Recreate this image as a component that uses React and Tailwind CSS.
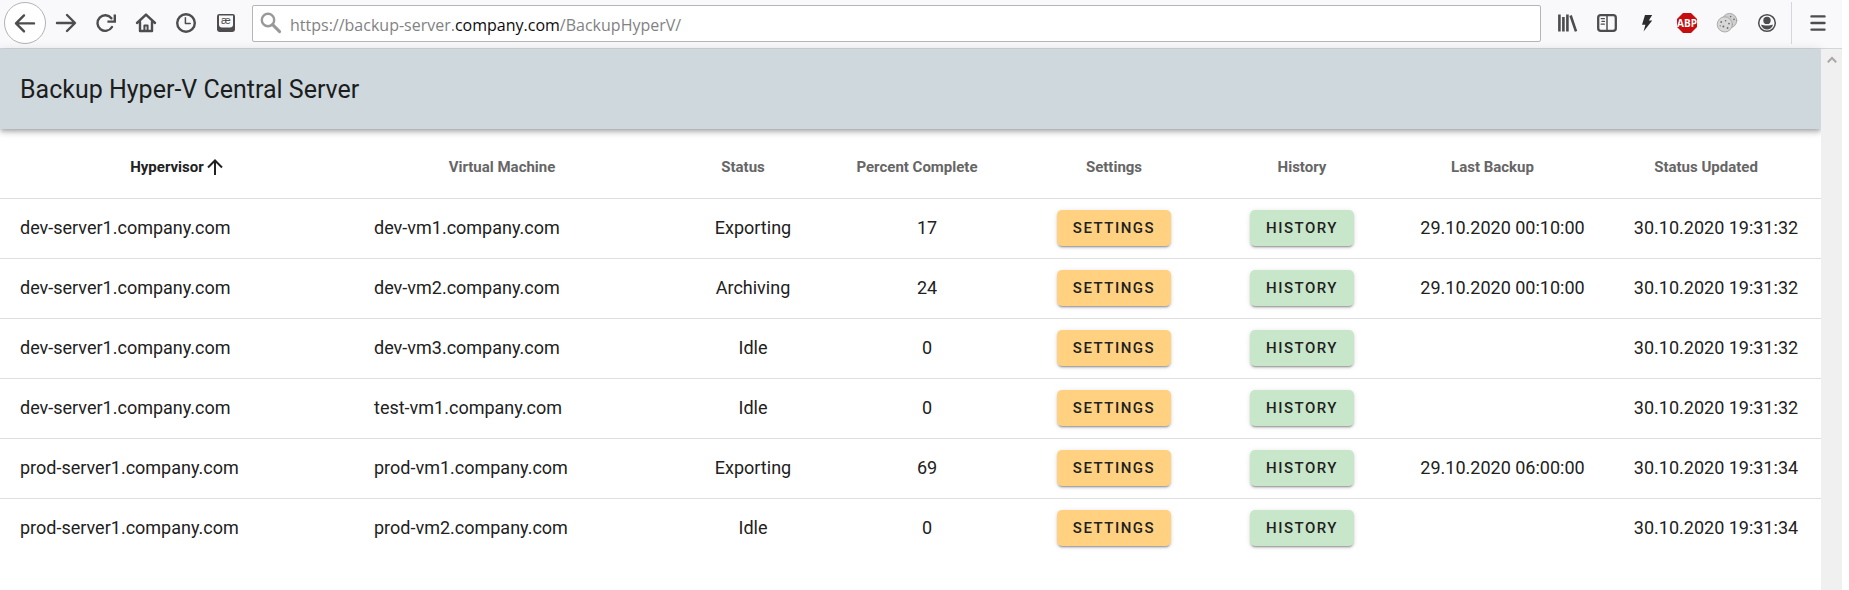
import React from "react";

const rows = [
  ["dev-server1.company.com", "dev-vm1.company.com", "Exporting", 17, "29.10.2020 00:10:00", "30.10.2020 19:31:32"],
  ["dev-server1.company.com", "dev-vm2.company.com", "Archiving", 24, "29.10.2020 00:10:00", "30.10.2020 19:31:32"],
  ["dev-server1.company.com", "dev-vm3.company.com", "Idle", 0, "", "30.10.2020 19:31:32"],
  ["dev-server1.company.com", "test-vm1.company.com", "Idle", 0, "", "30.10.2020 19:31:32"],
  ["prod-server1.company.com", "prod-vm1.company.com", "Exporting", 69, "29.10.2020 06:00:00", "30.10.2020 19:31:34"],
  ["prod-server1.company.com", "prod-vm2.company.com", "Idle", 0, "", "30.10.2020 19:31:34"],
];

function Icon({ children }) {
  return (
    <svg viewBox="0 0 24 24" className="size-6" fill="none" stroke="currentColor" strokeWidth="2.4" strokeLinecap="round" strokeLinejoin="round" aria-hidden="true">
      {children}
    </svg>
  );
}

function ToolButton({ label, children }) {
  return (
    <button type="button" aria-label={label} className="flex size-10 shrink-0 items-center justify-center text-[#4d4d4f]">
      <Icon>{children}</Icon>
    </button>
  );
}

function BrowserBar() {
  return (
    <div className="mr-[7px] flex items-center border-b border-[#d3d6da] bg-[#f9f9fb] px-1 pt-[2px] pb-1">
      <button type="button" aria-label="Back" className="flex size-[42px] shrink-0 items-center justify-center rounded-full border border-[#b3b3b5] bg-white text-[#4d4d4f]">
        <Icon>
          <path d="M21 12.4H3.5M11 4.4l-8 8 8 8" />
        </Icon>
      </button>
      <ToolButton label="Forward">
        <path d="M3 12H20.5M13 4l8 8-8 8" />
      </ToolButton>
      <ToolButton label="Reload">
        <path d="M17.4 7.2A7.8 7.8 0 1 0 18 16" />
        <path d="M20.8 3.6v7h-7.4" strokeLinecap="butt" strokeLinejoin="miter" />
      </ToolButton>
      <ToolButton label="Home">
        <path d="M3 12l9-8.4 9 8.4" />
        <path d="M6 11v9h12v-9" />
        <path d="M10.4 20v-5.4h3.2V20" strokeWidth="2" />
      </ToolButton>
      <ToolButton label="History">
        <circle cx="12" cy="12" r="8.8" />
        <path d="M11.4 6.8v5.8h4.8" strokeWidth="1.5" />
      </ToolButton>
      <ToolButton label="Dictionary">
        <rect x="3" y="3" width="18" height="18" rx="2.4" fill="currentColor" stroke="none" />
        <path d="M5 4.6h14v8.6c0 2.2-1 3.2-3 3.2H8c-2 0-3-1-3-3.2z" fill="#f9f9fb" stroke="none" />
        <text x="12" y="13" textAnchor="middle" fontSize="11" fontFamily="Liberation Sans, sans-serif" fill="currentColor" stroke="none">æ</text>
      </ToolButton>

      <div className="mx-[6px] flex h-[37px] min-w-0 flex-1 items-center rounded-[2px] border border-[#b5b5b7] bg-white pl-[7px]">
        <svg viewBox="0 0 22 22" className="size-[22px] shrink-0 text-[#999999]" fill="none" stroke="currentColor" aria-hidden="true">
          <circle cx="8" cy="8" r="6.2" strokeWidth="2.4" />
          <path d="M12.6 12.6l7 7" strokeWidth="3" strokeLinecap="round" />
        </svg>
        <div className="relative ml-2 min-w-0 flex-1 pt-1 font-['Open_Sans','Noto_Sans',sans-serif] text-[16px] leading-6">
          <input
            type="text"
            aria-label="Address"
            defaultValue="https://backup-server.company.com/BackupHyperV/"
            className="block w-full bg-transparent text-transparent caret-black outline-none"
          />
          <div aria-hidden="true" className="pointer-events-none absolute inset-x-0 bottom-0 truncate text-[#828284]">
            https://backup-server.<span className="text-[#0c0c0d]">company.com</span>/BackupHyperV/
          </div>
        </div>
      </div>

      <ToolButton label="Library">
        <path d="M4.4 3.5v17M8.4 6v14.5M12.4 3.5v17M15.6 4.5l5.4 15.8" strokeLinecap="butt" strokeWidth="2.6" />
      </ToolButton>
      <ToolButton label="Sidebars">
        <rect x="3.2" y="4.2" width="17.6" height="15.6" rx="2.6" strokeWidth="2.3" />
        <path d="M12 4v16" strokeWidth="1.5" />
        <path d="M6.2 7.6h3.2M7 10.4h2.4M6.2 13.2h3.2" strokeWidth="1.3" />
      </ToolButton>
      <ToolButton label="Power actions">
        <path d="M10 4h7.2l-3.4 5.4h3.4L8.6 20.4l1.8-6.6H7z" fill="#2c2c2e" stroke="none" />
      </ToolButton>
      <ToolButton label="Adblock Plus">
        <path d="M8 2h8l6 6v8l-6 6H8l-6-6V8z" fill="#c70d0e" stroke="none" />
        <text x="12" y="15.8" textAnchor="middle" fontSize="10" fontWeight="700" fontFamily="Open Sans, sans-serif" fill="#ffffff" stroke="none">ABP</text>
      </ToolButton>
      <ToolButton label="Cookies">
        <circle cx="14.6" cy="9.6" r="7.2" fill="#cfcfcf" stroke="#9c9c9c" strokeWidth="0.8" />
        <circle cx="9.8" cy="13.4" r="7.6" fill="#d8d8d8" stroke="#9c9c9c" strokeWidth="0.8" />
        <g fill="#6d6d6d" stroke="none">
          <circle cx="6.2" cy="11" r="0.9" />
          <circle cx="10.6" cy="9.8" r="0.8" />
          <circle cx="14" cy="12.6" r="0.9" />
          <circle cx="8.4" cy="15.6" r="1" />
          <circle cx="12.6" cy="17" r="0.9" />
          <circle cx="5.2" cy="14.8" r="0.6" />
          <circle cx="15.6" cy="5.6" r="0.8" />
          <circle cx="19" cy="8.4" r="0.8" />
        </g>
      </ToolButton>
      <ToolButton label="Account">
        <circle cx="12" cy="12" r="8.3" strokeWidth="1.5" />
        <circle cx="12" cy="9.4" r="3.7" fill="currentColor" stroke="none" />
        <path d="M6 13.8c1.6-.5 2.6.8 6 .8s4.4-1.3 6-.8c-.8 3-3.2 4.8-6 4.8s-5.2-1.8-6-4.8z" fill="currentColor" stroke="none" />
      </ToolButton>
      <div className="ml-1 mr-[6px] h-[42px] w-px bg-[#d7d7db]" />
      <ToolButton label="Menu">
        <path d="M5.5 5.4h13M5.5 12h13M5.5 18.6h13" strokeWidth="2.4" />
      </ToolButton>
    </div>
  );
}

function SortArrow({ active }) {
  return (
    <svg viewBox="0 0 18 18" className={active ? "size-[18px]" : "size-[18px] opacity-0"} fill="none" stroke="currentColor" strokeWidth="2" aria-hidden="true">
      <path d="M9 17V2.5M2 9.5l7-7 7 7" />
    </svg>
  );
}

function SortHead({ children, active }) {
  return (
    <th scope="col" aria-sort={active ? "ascending" : undefined} className="h-[69px] p-0 pt-2">
      <button type="button" className={active ? "inline-flex items-center gap-[2px] font-bold text-[#212121]" : "inline-flex items-center gap-[2px] font-bold"}>
        {children}
        <SortArrow active={active} />
      </button>
    </th>
  );
}

const raised = "shadow-[0_3px_1px_-2px_rgba(0,0,0,0.2),0_2px_2px_0_rgba(0,0,0,0.14),0_1px_5px_0_rgba(0,0,0,0.12)]";

function BackupTable() {
  return (
    <table className="w-full table-fixed border-collapse text-center text-[18px] leading-6 text-[#212121]">
      <colgroup>
        <col className="w-[354px]" />
        <col className="w-[316px]" />
        <col className="w-[166px]" />
        <col className="w-[182px]" />
        <col className="w-[192px]" />
        <col className="w-[184px]" />
        <col className="w-[217px]" />
        <col className="w-[210px]" />
      </colgroup>
      <thead className="text-[15px] text-[#666666]">
        <tr className="border-b border-[#dfdfdf]">
          <SortHead active>Hypervisor</SortHead>
          <SortHead>Virtual Machine</SortHead>
          <SortHead>Status</SortHead>
          <SortHead>Percent Complete</SortHead>
          <th scope="col" className="p-0 pt-2 font-bold">Settings</th>
          <th scope="col" className="p-0 pt-2 font-bold">History</th>
          <SortHead>Last Backup</SortHead>
          <SortHead>Status Updated</SortHead>
        </tr>
      </thead>
      <tbody>
        {rows.map(([host, vm, status, percent, last, updated]) => (
          <tr key={vm} className="border-b border-[#dfdfdf] last:border-b-0">
            <td className="h-[60px] py-0 pl-5 text-left">{host}</td>
            <td className="py-0 pl-5 text-left">{vm}</td>
            <td className="p-0">{status}</td>
            <td className="p-0">{percent}</td>
            <td className="p-0">
              <button type="button" className={`rounded-[5px] bg-[#ffd180] px-4 py-[6px] align-middle text-[15px] font-medium leading-6 tracking-widest ${raised}`}>SETTINGS</button>
            </td>
            <td className="p-0">
              <button type="button" className={`rounded-[5px] bg-[#c8e6c9] px-4 py-[6px] align-middle text-[15px] font-medium leading-6 tracking-widest ${raised}`}>HISTORY</button>
            </td>
            <td className="p-0">{last}</td>
            <td className="p-0">{updated}</td>
          </tr>
        ))}
      </tbody>
    </table>
  );
}

export default function App() {
  return (
    <div className="flex min-h-screen flex-col bg-white font-['Roboto',sans-serif]">
      <BrowserBar />
      <div className="flex flex-1">
        <main className="min-w-0 flex-1">
          <header className="bg-[#cfd8dc] px-5 pt-[25px] pb-[23px] shadow-[0_2px_4px_-1px_rgba(0,0,0,0.2),0_4px_5px_0_rgba(0,0,0,0.14),0_1px_10px_0_rgba(0,0,0,0.12)]">
            <h1 className="text-[25px] leading-8 text-[#1b1d1e]">Backup Hyper-V Central Server</h1>
          </header>
          <BackupTable />
        </main>
        <div className="mr-[7px] w-[21px] bg-[#f0f0f0]">
          <button type="button" aria-label="Scroll up" className="flex h-[22px] w-full items-center justify-center text-[#a8a8a8]">
            <svg viewBox="0 0 10 8" className="h-2 w-[10px]" fill="none" stroke="currentColor" strokeWidth="2" aria-hidden="true">
              <path d="M0.8 6.2L5 2l4.2 4.2" />
            </svg>
          </button>
        </div>
      </div>
    </div>
  );
}
